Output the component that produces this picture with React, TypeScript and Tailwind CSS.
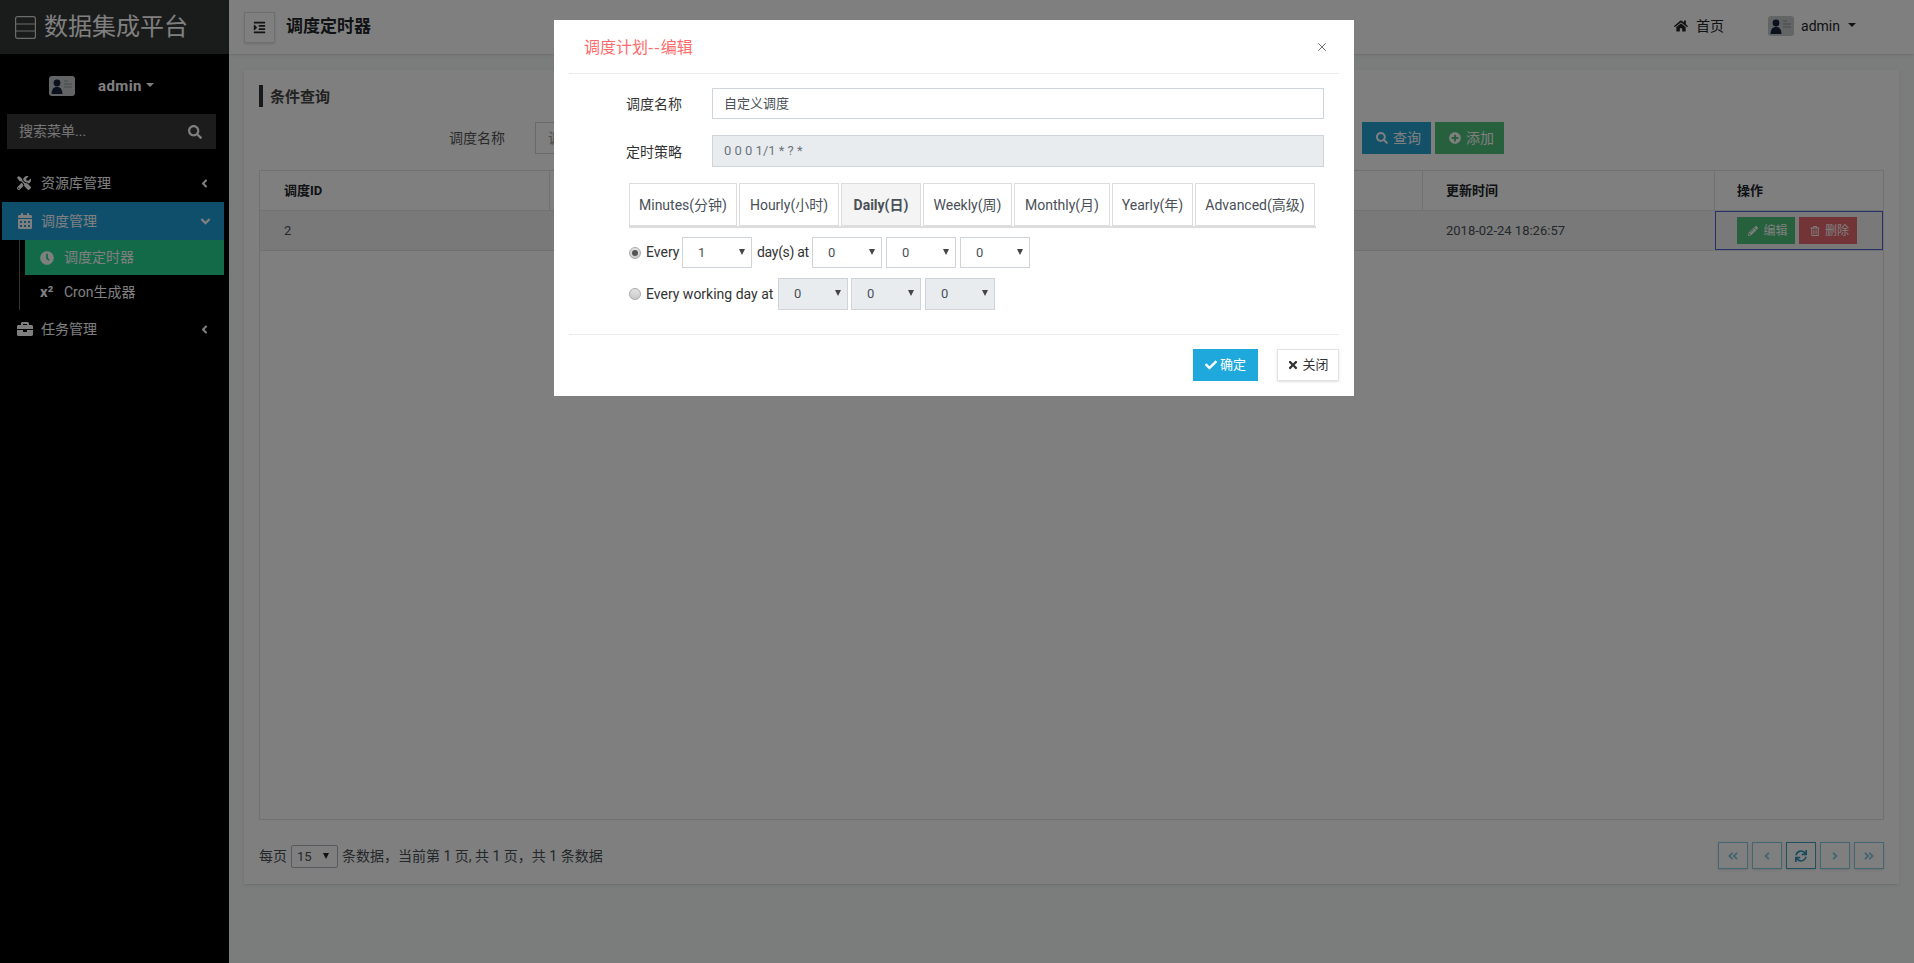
import React from 'react'
import {
  FaAngleDoubleLeft,
  FaAngleDoubleRight,
  FaAngleDown,
  FaAngleLeft,
  FaAngleRight,
  FaBriefcase,
  FaCalendarAlt,
  FaCheck,
  FaClock,
  FaHome,
  FaIndent,
  FaPencilAlt,
  FaPlusCircle,
  FaRegTrashAlt,
  FaSearch,
  FaSync,
  FaTimes,
  FaTools,
} from 'react-icons/fa'
import { X } from 'lucide-react'

const tabs = [
  { label: 'Minutes(分钟)', w: 'w-[108px]' },
  { label: 'Hourly(小时)', w: 'w-[100px]' },
  { label: 'Daily(日)', w: 'w-[80px]', active: true },
  { label: 'Weekly(周)', w: 'w-[89px]' },
  { label: 'Monthly(月)', w: 'w-[96px]' },
  { label: 'Yearly(年)', w: 'w-[81px]' },
  { label: 'Advanced(高级)', w: 'w-[120px]' },
]

function Avatar() {
  return (
    <svg width="26" height="20" viewBox="0 0 26 20">
      <rect x="0" y="0" width="26" height="20" rx="3" fill="#c4c8cc" />
      <circle cx="8" cy="7" r="3.4" fill="#16233a" />
      <path d="M2.5 18 C3 12 5 11 8 11 C11 11 13 12 13.5 18 Z" fill="#16233a" />
      <path d="M15 5h4M15 8h8M15 11h8" stroke="#8d9296" strokeWidth="1.2" />
    </svg>
  )
}

function Caret() {
  return <span className="inline-block w-0 h-0 border-x-[4px] border-x-transparent border-t-[4px] border-t-current" />
}

function FakeSelect({ value, disabled = false }: { value: string; disabled?: boolean }) {
  return (
    <div
      className={`relative w-[70px] flex items-center pl-[15px] border border-[#ced4da] text-[#495057] text-[13px] ${
        disabled ? 'h-[32px] bg-[#e9ecef]' : 'h-[31px] bg-white'
      }`}
    >
      {value}
      <span className="absolute right-[6px] top-[11px] w-0 h-0 border-x-[3px] border-x-transparent border-t-[6px] border-t-[#444]" />
    </div>
  )
}

function Radio({ checked = false }: { checked?: boolean }) {
  return (
    <span className="w-[12px] h-[12px] rounded-full border border-[#a9a9a9] bg-gradient-to-b from-[#e4e4e4] to-[#c9c9c9] flex items-center justify-center shrink-0">
      {checked && <span className="w-[6px] h-[6px] rounded-full bg-[#555]" />}
    </span>
  )
}

function MenuItem({ icon, label, open = false }: { icon: React.ReactNode; label: string; open?: boolean }) {
  return (
    <div className={`h-[38px] mx-[2px] w-[222px] flex items-center pl-[15px] pr-[13px] text-white text-[14px] ${open ? 'bg-[#1f9fd8]' : ''}`}>
      <span className="w-[24px] flex text-[16px]">{icon}</span>
      <span className="flex-1">{label}</span>
      {open ? <FaAngleDown className="text-[15px] -mr-[2px]" /> : <FaAngleLeft className="text-[13px]" />}
    </div>
  )
}

function PageButton({ children, strong = false }: { children: React.ReactNode; strong?: boolean }) {
  return (
    <div
      className={`w-[30px] h-[27px] flex items-center justify-center border text-[12px] shadow-sm ${
        strong ? 'border-[#3fa2c2] text-[#2f94b8]' : 'border-[#86cde2] text-[#86cde2]'
      }`}
    >
      {children}
    </div>
  )
}

export default function App() {
  return (
    <div className="relative h-screen overflow-hidden flex bg-[#f6faf8] text-[#343a40] text-[14px] font-[family-name:Roboto,'Noto_Sans_CJK_SC',sans-serif]">
      {/* Sidebar */}
      <aside className="w-[229px] shrink-0 bg-black">
        <div className="h-[54px] bg-[#343636] flex items-center pl-[15px] text-white">
          <svg width="21" height="23" viewBox="0 0 21 23" fill="none" stroke="currentColor" strokeWidth="1.2" className="mr-[8px] opacity-80">
            <rect x="0.6" y="0.6" width="19.8" height="21.8" rx="2" />
            <path d="M0.6 8h19.8M0.6 15h19.8" />
          </svg>
          <span className="text-[24px] leading-none">数据集成平台</span>
        </div>
        <div className="h-[60px] pt-[4px] flex items-center pl-[49px] text-white">
          <Avatar />
          <span className="ml-[23px] font-bold text-[15px] tracking-[0.4px]">admin</span>
          <span className="ml-[4px] -mt-[2px] flex"><Caret /></span>
        </div>
        <div className="mx-[7px] h-[35px] w-[209px] bg-[#383838] flex items-center justify-between pl-[12px] pr-[14px] text-white">
          <span className="opacity-90">搜索菜单...</span>
          <FaSearch className="text-[14px]" />
        </div>
        <div className="mt-[15px]">
          <MenuItem icon={<FaTools className="text-[14px]" />} label="资源库管理" />
          <MenuItem icon={<FaCalendarAlt />} label="调度管理" open />
          <div className="border-l border-[#666] ml-[19px] h-[70px]">
            <div className="ml-[5px] w-[199px] h-[35px] bg-[#26d493] flex items-center pl-[15px] text-white">
              <FaClock className="text-[14px] mr-[10px]" />
              调度定时器
            </div>
            <div className="h-[35px] flex items-center pl-[20px] text-white">
              <span className="w-[24px] font-bold text-[15px]">x²</span>
              Cron生成器
            </div>
          </div>
          <MenuItem icon={<FaBriefcase />} label="任务管理" />
        </div>
      </aside>

      {/* Main */}
      <main className="flex-1 min-w-0 flex flex-col">
        <header className="h-[54px] bg-white shadow-sm flex items-center pl-[15px] pr-[58px] text-[#212529]">
          <div className="w-[31px] h-[31px] border border-[#dcdcdc] flex items-center justify-center text-[13px] shadow-sm">
            <FaIndent />
          </div>
          <h1 className="ml-[11px] text-[17px] font-bold">调度定时器</h1>
          <div className="ml-auto -mt-[2px] flex items-center">
            <FaHome className="text-[14px] mr-[8px]" />
            <span>首页</span>
            <span className="ml-[44px] mr-[7px] flex"><Avatar /></span>
            <span>admin</span>
            <span className="ml-[8px] -mt-[3px] flex"><Caret /></span>
          </div>
        </header>

        <section className="mt-[16px] ml-[15px] mr-[15px] h-[814px] bg-white shadow-sm px-[15px] pt-[15px] flex flex-col">
          <div className="h-[22px] border-l-[4px] border-[#333] pl-[7px] text-[15px] font-bold flex items-center text-[#444]">
            <span className="mt-[2px]">条件查询</span>
          </div>
          <div className="mt-[15px] h-[32px] flex items-center">
            <label className="ml-[190px] w-[56px] shrink-0 text-[#555]">调度名称</label>
            <div className="ml-[30px] flex-1 h-[32px] border border-[#ced4da] pl-[12px] flex items-center text-[#999]">调度名称</div>
            <button className="ml-[22px] w-[69px] h-[32px] pl-[4px] bg-[#27a3d3] text-white flex items-center justify-center gap-[5px]">
              <FaSearch className="text-[12px]" />
              查询
            </button>
            <button className="ml-[4px] mr-[380px] w-[69px] h-[32px] pl-[4px] bg-[#4fc07a] text-white flex items-center justify-center gap-[5px]">
              <FaPlusCircle className="text-[12px]" />
              添加
            </button>
          </div>

          <div className="mt-[16px] h-[650px] border border-[#dee2e6] text-[13px]">
            <div className="h-[40px] grid grid-cols-[290px_291px_291px_291px_292px_1fr] border-b border-[#dee2e6] font-bold text-[#212529]">
              <div className="flex items-center pl-[24px] border-r border-[#dee2e6]">调度ID</div>
              <div className="border-r border-[#dee2e6]" />
              <div className="border-r border-[#dee2e6]" />
              <div className="border-r border-[#dee2e6]" />
              <div className="flex items-center pl-[23px] border-r border-[#dee2e6]">更新时间</div>
              <div className="flex items-center pl-[22px]">操作</div>
            </div>
            <div className="h-[40px] grid grid-cols-[290px_291px_291px_291px_292px_1fr] border-b border-[#dee2e6] bg-[#f2f2f2] text-[#495057]">
              <div className="flex items-center pl-[24px] pt-[1px]">2</div>
              <div />
              <div />
              <div />
              <div className="flex items-center pl-[23px] pt-[1px]">2018-02-24 18:26:57</div>
              <div className="flex items-center gap-[4px] pl-[21px] border border-[#4a63d0] text-[12px] text-white">
                <button className="w-[58px] h-[27px] pl-[4px] bg-[#4fc07a] flex items-center justify-center gap-[5px]">
                  <FaPencilAlt className="text-[10px]" />
                  编辑
                </button>
                <button className="w-[58px] h-[27px] pl-[3px] bg-[#e5686f] flex items-center justify-center gap-[5px]">
                  <FaRegTrashAlt className="text-[10px]" />
                  删除
                </button>
              </div>
            </div>
          </div>

          <div className="mt-[22px] h-[27px] flex items-center justify-between text-[#495057]">
            <div className="flex items-center mt-[2px]">
              每页
              <div className="relative ml-[4px] mr-[4px] w-[47px] h-[23px] border border-[#adb5bd] rounded-[2px] pl-[5px] flex items-center text-[13px]">
                15
                <span className="absolute right-[8px] top-[7px] w-0 h-0 border-x-[3px] border-x-transparent border-t-[6px] border-t-[#222]" />
              </div>
              条数据，当前第 1 页, 共 1 页，共 1 条数据
            </div>
            <div className="flex gap-[4px]">
              <PageButton><FaAngleDoubleLeft /></PageButton>
              <PageButton><FaAngleLeft /></PageButton>
              <PageButton strong><FaSync /></PageButton>
              <PageButton><FaAngleRight /></PageButton>
              <PageButton><FaAngleDoubleRight /></PageButton>
            </div>
          </div>
        </section>
      </main>

      {/* Modal */}
      <div className="absolute inset-0 bg-black/50">
        <div className="ml-[554px] mt-[20px] w-[800px] h-[376px] bg-white px-[15px] text-[#333]">
          <div className="h-[54px] border-b border-[#e9ecef] flex items-center justify-between pl-[15px] pr-[10px]">
            <span className="mt-[2px] text-[16px] text-[#ff6b6b]">
              调度计划<span className="tracking-[1px] [font-variant-ligatures:none] font-[family-name:'Liberation_Sans',sans-serif]">--</span>编辑
            </span>
            <X size={14} strokeWidth={1.6} className="text-[#666]" />
          </div>

          <div className="mt-[14px] flex items-center h-[31px]">
            <label className="ml-[57px] w-[56px] shrink-0 mt-[2px]">调度名称</label>
            <div className="ml-[30px] w-[612px] h-[31px] border border-[#ced4da] pl-[11px] flex items-center text-[#495057] text-[13px]">自定义调度</div>
          </div>
          <div className="mt-[16px] flex items-center h-[32px]">
            <label className="ml-[57px] w-[56px] shrink-0 mt-[2px]">定时策略</label>
            <div className="ml-[30px] w-[612px] h-[32px] border border-[#ced4da] bg-[#e9ecef] pl-[11px] flex items-center text-[#6c757d] text-[13px]">0 0 0 1/1 * ? *</div>
          </div>

          <div className="mt-[16px] ml-[60px] w-[687px] h-[45px] border-b-2 border-[#ddd] flex gap-[2px]">
            {tabs.map(tab => (
              <div
                key={tab.label}
                className={`${tab.w} h-[43px] pt-[2px] border border-[#ddd] flex items-center justify-center text-[#495057] ${
                  tab.active ? 'bg-[#f4f4f4] font-bold text-[#333]' : 'bg-white'
                }`}
              >
                {tab.label}
              </div>
            ))}
          </div>

          <div className="mt-[9px] ml-[60px] h-[31px] flex items-center">
            <Radio checked />
            <span className="ml-[5px] w-[36px]">Every</span>
            <FakeSelect value="1" />
            <span className="ml-[5px] w-[55px] tracking-[-0.3px]">day(s) at</span>
            <div className="flex gap-[4px]">
              <FakeSelect value="0" />
              <FakeSelect value="0" />
              <FakeSelect value="0" />
            </div>
          </div>
          <div className="mt-[10px] ml-[60px] h-[32px] flex items-center">
            <Radio />
            <span className="ml-[5px] w-[132px]">Every working day at</span>
            <div className="flex gap-[3px]">
              <FakeSelect value="0" disabled />
              <FakeSelect value="0" disabled />
              <span className="ml-[1px]"><FakeSelect value="0" disabled /></span>
            </div>
          </div>

          <div className="mt-[24px] border-t border-[#e9ecef] pt-[14px] flex justify-end gap-[19px]">
            <button className="w-[65px] h-[32px] bg-[#1fa8dc] text-white text-[13px] flex items-center justify-center gap-[3px]">
              <FaCheck className="text-[12px]" />
              确定
            </button>
            <button className="w-[62px] h-[32px] bg-white border border-[#e4e4e4] shadow-sm text-[13px] flex items-center justify-center gap-[3px]">
              <FaTimes className="text-[12px]" />
              关闭
            </button>
          </div>
        </div>
      </div>
    </div>
  )
}
